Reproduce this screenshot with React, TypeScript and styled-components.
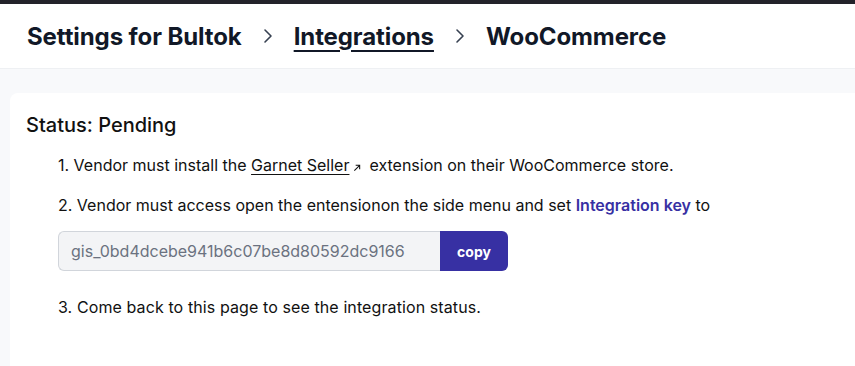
import React from 'react';
import styled, { createGlobalStyle } from 'styled-components';

const GlobalStyle = createGlobalStyle`
    html, body {
        margin: 0;
        padding: 0;
        background: #f8f9fb;
        font-family: Inter, "Liberation Sans", sans-serif;
        color: #111827;
    }
`

const TopBar = styled.div`
    height: 4px;
    background-color: #23222a;
`

const Header = styled.header`
    height: 64px;
    display: flex;
    align-items: center;
    padding-left: 27px;
    background-color: #ffffff;
    border-bottom: 1px solid #eef0f3;
`

const Crumb = styled.span<{ $link?: boolean }>`
    font-size: 24px;
    font-weight: 700;
    letter-spacing: -0.1px;
    color: #111827;
    text-decoration: ${p => (p.$link ? 'underline' : 'none')};
    text-decoration-thickness: 2px;
    text-underline-offset: 5px;
`

const Separator = styled.span`
    display: flex;
    margin: 0 21px;
    color: #374151;
`

const Main = styled.main`
    padding: 24px 0 0 10px;
`

const Card = styled.section`
    background-color: #ffffff;
    border-radius: 8px 0 0 0;
    padding: 18px 16px 40px;
    min-height: 280px;
    box-sizing: border-box;
`

const Title = styled.h2`
    margin: 0 0 14px;
    font-size: 20px;
    font-weight: 500;
    line-height: 28px;
    color: #111111;
`

const Steps = styled.ol`
    margin: 0;
    padding-left: 32px;
    list-style: none;
    font-size: 16px;
    line-height: 24px;
    color: #111111;

    li + li {
        margin-top: 16px;
    }
`

const ExternalLink = styled.a`
    color: inherit;
    text-decoration: underline;
    text-underline-offset: 3px;
`

const LinkIcon = styled.svg`
    margin: 0 8px 0 4px;
    vertical-align: -1px;
`

const KeyLink = styled.a`
    color: #3730a3;
    font-weight: 600;
    text-decoration: none;
`

const KeyRow = styled.div`
    display: flex;
    margin-top: 14px;
    height: 40px;
    width: 450px;
`

const KeyInput = styled.input`
    flex: 0 0 382px;
    box-sizing: border-box;
    height: 40px;
    padding: 0 12px;
    background-color: #f3f4f6;
    border: 1px solid #d1d5db;
    border-right: none;
    border-radius: 6px 0 0 6px;
    font-family: inherit;
    font-size: 16px;
    color: #6b7280;
    outline: none;
`

const CopyButton = styled.button`
    flex: 0 0 68px;
    height: 40px;
    background-color: #3730a3;
    color: #ffffff;
    border: none;
    border-radius: 0 6px 6px 0;
    font-family: inherit;
    font-size: 14px;
    font-weight: 700;
    cursor: pointer;
`

const LastStep = styled.li`
    && {
        margin-top: 24px;
    }
    letter-spacing: 0.1px;
`

const Chevron = () => (
    <svg width="10" height="16" viewBox="0 0 10 16" fill="none">
        <path d="M2 2l6 6-6 6" stroke="currentColor" strokeWidth="1.6" strokeLinecap="round" strokeLinejoin="round" />
    </svg>
)

const App: React.FunctionComponent = () => {
    const integrationKey = 'gis_0bd4dcebe941b6c07be8d80592dc9166';

    return (
        <>
            <GlobalStyle />
            <TopBar />
            <Header>
                <Crumb>Settings for Bultok</Crumb>
                <Separator><Chevron /></Separator>
                <Crumb $link>Integrations</Crumb>
                <Separator><Chevron /></Separator>
                <Crumb>WooCommerce</Crumb>
            </Header>
            <Main>
                <Card>
                    <Title>Status: Pending</Title>
                    <Steps>
                        <li>
                            1. Vendor must install the <ExternalLink href='#'>Garnet Seller</ExternalLink>
                            <LinkIcon width="8" height="8" viewBox="0 0 9 9" fill="none">
                                <path d="M1.5 7.5l6-6M3 1.5h4.5V6" stroke="currentColor" strokeWidth="1.2" />
                            </LinkIcon>extension on their WooCommerce store.
                        </li>
                        <li>
                            2. Vendor must access open the entensionon the side menu and set <KeyLink href='#'>Integration key</KeyLink> to
                            <KeyRow>
                                <KeyInput readOnly value={integrationKey} />
                                <CopyButton>copy</CopyButton>
                            </KeyRow>
                        </li>
                        <LastStep>3. Come back to this page to see the integration status.</LastStep>
                    </Steps>
                </Card>
            </Main>
        </>
    )
}

export default App;
